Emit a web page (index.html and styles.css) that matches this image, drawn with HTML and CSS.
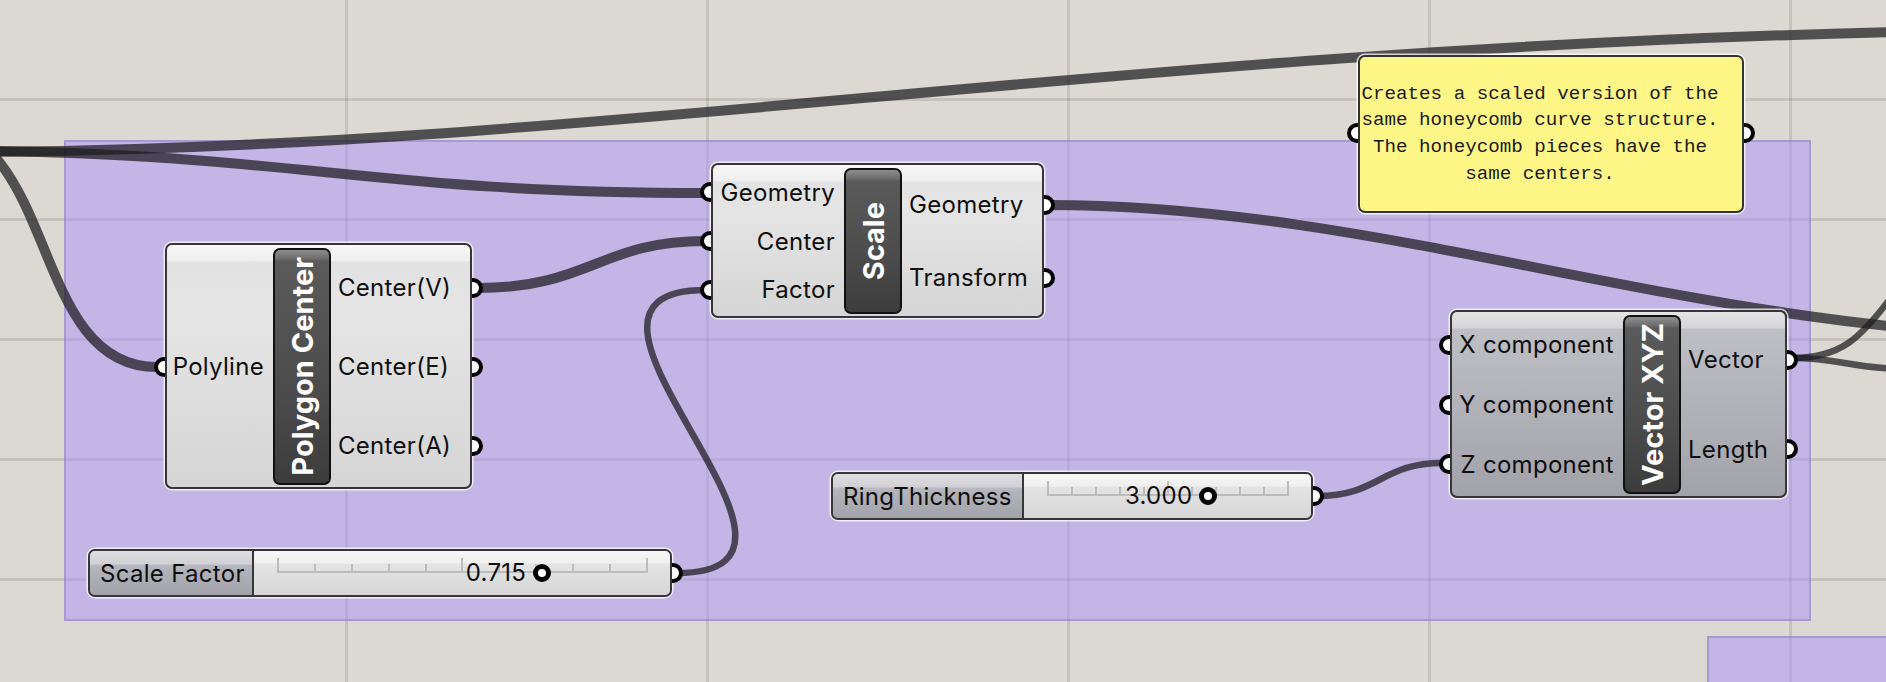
FILE: index.html
```html
<!DOCTYPE html>
<html>
<head>
<meta charset="utf-8">
<link rel="stylesheet" href="styles.css">
</head>
<body>
<div class="canvas">
  <div class="group g1"></div>
  <div class="group g2"></div>

  <svg class="wires" width="1886" height="682" viewBox="0 0 1886 682">
    <path class="list" d="M -20 152 C 600 148, 1100 50, 1900 32"/>
    <path class="list" d="M -100 150 C 300 150, 350 193, 706 193"/>
    <path class="list" d="M -75 125 C 60 125, 27 367, 157 367"/>
    <path class="list" d="M 478 288 C 590 288, 600 241, 706 241"/>
    <path class="item" d="M 677 573 C 867 573, 515 290, 706 290"/>
    <path class="list" d="M 1048 205 C 1400 205, 1700 338, 2100 338"/>
    <path class="item" d="M 1792 358 C 1840 358, 1860 340, 1895 292"/>
    <path class="item" d="M 1792 358 C 1840 358, 1850 368, 1900 369"/>
    <path class="item" d="M 1317 496 C 1380 496, 1380 463, 1443 463"/>
  </svg>

  <div class="comp n-poly">
    <div class="col ins">
      <div class="param in"><span class="grip"></span>Polyline</div>
    </div>
    <div class="nick"><span>Polygon Center</span></div>
    <div class="col outs">
      <div class="param out">Center(V)<span class="grip"></span></div>
      <div class="param out">Center(E)<span class="grip"></span></div>
      <div class="param out">Center(A)<span class="grip"></span></div>
    </div>
  </div>

  <div class="comp n-scale">
    <div class="col ins">
      <div class="param in"><span class="grip"></span>Geometry</div>
      <div class="param in"><span class="grip"></span>Center</div>
      <div class="param in"><span class="grip"></span>Factor</div>
    </div>
    <div class="nick"><span>Scale</span></div>
    <div class="col outs">
      <div class="param out">Geometry<span class="grip"></span></div>
      <div class="param out">Transform<span class="grip"></span></div>
    </div>
  </div>

  <div class="comp grey n-vec">
    <div class="col ins">
      <div class="param in"><span class="grip"></span>X component</div>
      <div class="param in"><span class="grip"></span>Y component</div>
      <div class="param in"><span class="grip"></span>Z component</div>
    </div>
    <div class="nick"><span>Vector XYZ</span></div>
    <div class="col outs">
      <div class="param out">Vector<span class="grip"></span></div>
      <div class="param out">Length<span class="grip"></span></div>
    </div>
  </div>

  <div class="slider n-sf">
    <div class="sname">Scale Factor</div>
    <div class="sbody">
      <div class="track">
        <i class="big"></i><i></i><i></i><i></i><i></i><i class="big"></i><i></i><i></i><i></i><i></i><i class="big"></i>
        <div class="thumb" style="left: 71.5%"><span class="val">0.715</span><span class="knob"></span></div>
      </div>
      <span class="grip sgrip"></span>
    </div>
  </div>

  <div class="slider n-rt">
    <div class="sname">RingThickness</div>
    <div class="sbody">
      <div class="track">
        <i class="big"></i><i></i><i></i><i></i><i></i><i class="big"></i><i></i><i></i><i></i><i></i><i class="big"></i>
        <div class="thumb" style="left: 66.7%"><span class="val">3.000</span><span class="knob"></span></div>
      </div>
      <span class="grip sgrip"></span>
    </div>
  </div>

  <div class="panel n-note">
    <span class="grip pin"></span>
    <p>Creates a scaled version of the<br>same honeycomb curve structure.<br>The honeycomb pieces have the<br>same centers.</p>
    <span class="grip pout"></span>
  </div>
</div>
</body>
</html>
```

FILE: styles.css
```css
html, body {
  margin: 0;
  padding: 0;
}

body {
  width: 1886px;
  height: 682px;
  overflow: hidden;
  font-family: Inter, "Liberation Sans", sans-serif;
}

.canvas {
  position: relative;
  width: 1886px;
  height: 682px;
  overflow: hidden;
  background-color: #dcd9d2;
  background-image:
    linear-gradient(to right, rgba(0, 0, 0, 0.1) 3px, transparent 3px),
    linear-gradient(to bottom, rgba(0, 0, 0, 0.1) 3px, transparent 3px);
  background-size: 361px 120px;
  background-position: 345px 98px;
}

/* groups */
.group {
  position: absolute;
  box-sizing: border-box;
  background: rgba(170, 145, 250, 0.5);
  border: 2px solid rgba(110, 90, 170, 0.3);
}
.g1 { left: 64px; top: 140px; width: 1747px; height: 481px; }
.g2 { left: 1707px; top: 636px; width: 240px; height: 120px; }

/* wires */
.wires {
  position: absolute;
  left: 0;
  top: 0;
  z-index: 1;
  pointer-events: none;
}
.wires path {
  fill: none;
  stroke: rgba(28, 27, 30, 0.72);
}
.wires .list { stroke-width: 10px; }
.wires .item { stroke-width: 6.5px; }

/* components */
.comp {
  position: absolute;
  z-index: 2;
  box-sizing: border-box;
  display: flex;
  padding: 3px 0 2px;
  border: 2px solid #363636;
  border-radius: 7px;
  box-shadow: 0 0 0 1.5px rgba(255, 255, 255, 0.75);
  background: linear-gradient(to bottom, #f8f8f8 0, #eeeeee 16px, #e2e2e2 17px, #e5e5e5 30%, #d5d5d5 100%);
  font-size: 24px;
  letter-spacing: 0.3px;
  color: #0e0e0e;
}
.comp.grey {
  background: linear-gradient(to bottom, #e4e4e7 0, #d6d6da 16px, #bfbfc6 17px, #b8b8bf 30%, #a2a2aa 100%);
}

.n-poly { left: 165px; top: 243px; width: 307px; height: 246px; }
.n-poly .ins { width: 106px; }
.n-scale { left: 711px; top: 163px; width: 333px; height: 155px; }
.n-scale .ins { width: 131px; }
.n-vec { left: 1450px; top: 310px; width: 337px; height: 188px; }
.n-vec .ins { width: 171px; }

.col {
  display: flex;
  flex-direction: column;
}
.outs { flex: 1; }

.param {
  position: relative;
  flex: 1;
  display: flex;
  align-items: center;
  white-space: nowrap;
}
.ins .param {
  justify-content: flex-end;
  padding-right: 9px;
}
.outs .param {
  padding-left: 7px;
}

.grip {
  position: absolute;
  top: 50%;
  width: 11px;
  height: 20px;
  margin-top: -10px;
  box-sizing: border-box;
  background: #fff;
  border: 4px solid #000;
}
.in .grip, .grip.pin {
  left: -13px;
  border-right: 0;
  border-radius: 10px 0 0 10px;
}
.out .grip, .grip.sgrip, .grip.pout {
  right: -13px;
  border-left: 0;
  border-radius: 0 10px 10px 0;
}

.nick {
  width: 58px;
  box-sizing: border-box;
  border: 2px solid #111;
  border-radius: 7px;
  background: linear-gradient(to bottom, #8e8e8e 0, #6c6c6c 9px, #5a5a5a 11px, #4c4c4c 60%, #3c3c3c 100%);
  display: flex;
  align-items: center;
  justify-content: center;
  color: #fff;
  font-weight: 700;
  font-size: 29px;
  letter-spacing: 0;
}
.nick span {
  writing-mode: vertical-rl;
  transform: rotate(180deg);
  white-space: nowrap;
  line-height: 1;
}

/* sliders */
.slider {
  position: absolute;
  z-index: 2;
  box-sizing: border-box;
  display: flex;
  height: 48px;
  border: 2px solid #363636;
  border-radius: 7px;
  box-shadow: 0 0 0 1.5px rgba(255, 255, 255, 0.75);
  font-size: 24px;
  letter-spacing: 0.3px;
  color: #0e0e0e;
}
.n-sf { left: 88px; top: 549px; width: 584px; }
.n-sf .sname { width: 164px; }
.n-rt { left: 831px; top: 472px; width: 482px; }
.n-rt .sname { width: 191px; }

.sname {
  box-sizing: border-box;
  display: flex;
  align-items: center;
  padding-left: 10px;
  border-right: 2px solid #363636;
  border-radius: 5px 0 0 5px;
  white-space: nowrap;
  background: linear-gradient(to bottom, #dedee2 0, #d0d0d5 13px, #b9b9c1 14px, #b3b3bb 40%, #a2a2aa 100%);
}
.sbody {
  position: relative;
  flex: 1;
  display: flex;
  padding: 0 22px 0 23px;
  border-radius: 0 5px 5px 0;
  background: linear-gradient(to bottom, #f7f7f7 0, #efefef 12px, #e4e4e4 13px, #e2e2e2 40%, #d6d6d6 100%);
}
.track {
  position: relative;
  flex: 1;
  align-self: flex-start;
  margin-top: 7px;
  height: 15px;
  box-sizing: border-box;
  display: flex;
  justify-content: space-between;
  align-items: flex-end;
  border-bottom: 2px solid #bcbcbc;
}
.track i {
  width: 2px;
  height: 7px;
  background: #bcbcbc;
}
.track i.big {
  height: 13px;
}
.thumb {
  position: absolute;
  bottom: -1px;
  width: 0;
  height: 0;
}
.knob {
  position: absolute;
  left: -9px;
  top: -8px;
  width: 18px;
  height: 18px;
  box-sizing: border-box;
  border: 5px solid #000;
  border-radius: 50%;
  background: #fff;
}
.val {
  position: absolute;
  right: 16px;
  top: -14px;
  line-height: 30px;
  white-space: nowrap;
}

/* panel */
.panel {
  position: absolute;
  z-index: 2;
  left: 1358px;
  top: 55px;
  width: 386px;
  height: 158px;
  box-sizing: border-box;
  display: flex;
  align-items: center;
  justify-content: center;
  padding-right: 22px;
  background: #fff688;
  border: 2px solid #333;
  border-radius: 7px;
  box-shadow: 0 0 0 1.5px rgba(255, 255, 255, 0.75);
}
.panel p {
  margin: 0;
  font-family: "Liberation Mono", "Courier New", monospace;
  font-size: 19.2px;
  line-height: 26.7px;
  text-align: center;
  white-space: nowrap;
  color: #1a1a1a;
}
.panel .grip {
  top: 66px;
  margin-top: 0;
}
```
